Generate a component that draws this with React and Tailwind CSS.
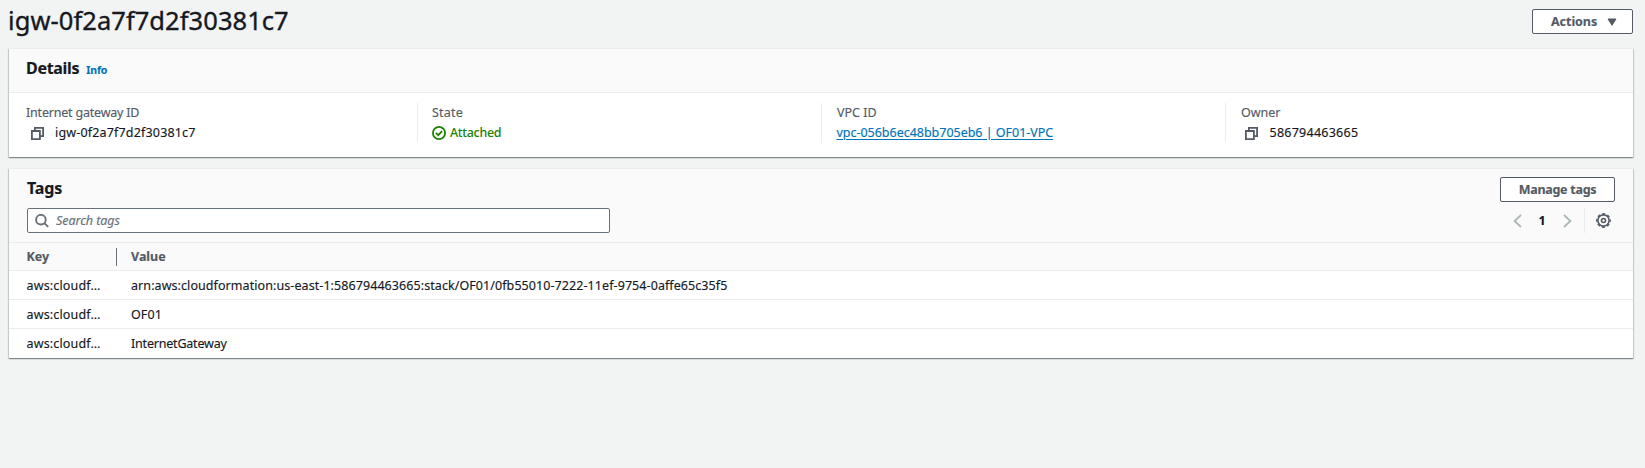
import React from "react";

const panel =
  "border-t border-[#eaeded] bg-white shadow-[0_1px_1px_0_rgba(0,28,36,0.3),1px_1px_1px_0_rgba(0,28,36,0.15),-1px_1px_1px_0_rgba(0,28,36,0.15)]";

const button =
  "flex h-[25px] items-center rounded-[2px] border border-[#545b64] bg-white text-[12.5px] leading-[23px] font-bold text-[#545b64]";

const rows = [
  {
    value:
      "arn:aws:cloudformation:us-east-1:586794463665:stack/OF01/0fb55010-7222-11ef-9754-0affe65c35f5",
    style: "tracking-[0.075px]",
    line: "pt-[2px]",
  },
  { value: "OF01", style: "tracking-[0.1px]", line: "pt-[2px]" },
  { value: "InternetGateway", style: "tracking-[-0.2px]", line: "" },
];

function CopyIcon() {
  return (
    <svg className="ml-1 size-[13px] shrink-0" viewBox="0 0 13 13" fill="none" stroke="#545b64" strokeWidth="1.8">
      <path d="M0.9 4h8v8.1h-8z" />
      <path d="M3.9 4V0.9h8.2v8.2H8.9" />
    </svg>
  );
}

function CheckIcon() {
  return (
    <svg className="size-[14px] shrink-0" viewBox="0 0 14 14" fill="none" stroke="#1d8102" strokeWidth="1.8">
      <circle cx="7" cy="7" r="6.1" />
      <path d="M3.9 6.9l2.3 2.3 3.9-4" />
    </svg>
  );
}

function SearchIcon() {
  return (
    <svg className="size-[14px] shrink-0" viewBox="0 0 14 14" fill="none" stroke="#687078" strokeWidth="1.9">
      <circle cx="5.9" cy="5.7" r="4.8" />
      <path d="M9.3 9.1l3.9 3.8" />
    </svg>
  );
}

function Chevron({ d }) {
  return (
    <svg className="h-[14px] w-[9px]" viewBox="0 0 9 14" fill="none" stroke="#aab7b8" strokeWidth="1.8">
      <path d={d} />
    </svg>
  );
}

function GearIcon() {
  return (
    <svg className="size-[15px]" viewBox="0 0 15 15" fill="none" stroke="#545b64">
      <circle cx="7.5" cy="7.5" r="5.6" strokeWidth="1.6" />
      <circle cx="7.5" cy="7.5" r="6.7" strokeWidth="1.4" strokeDasharray="2.9 2.36" strokeDashoffset="1.45" />
      <circle cx="7.5" cy="7.5" r="2" strokeWidth="1.6" />
    </svg>
  );
}

function Field({ label, first, children }) {
  return (
    <div className={first ? "h-10 pl-[17px]" : "h-10 border-l border-[#eaeded] pl-[14px]"}>
      <div className="h-5 leading-[19px] text-[#545b64]">{label}</div>
      <div className="flex h-5 items-center leading-5">{children}</div>
    </div>
  );
}

export default function App() {
  return (
    <div className="h-[468px] overflow-hidden bg-[#f2f3f3] pr-[12px] pl-[9px] font-['Noto_Sans',sans-serif] text-[12.5px] text-[#16191f] [-webkit-text-stroke:0.15px]">
      <header className="flex h-12 items-start justify-between pt-[9px]">
        <h1 className="-ml-px h-[25px] text-[25.5px] leading-[23px] tracking-[0.06px] [-webkit-text-stroke:0.35px]">
          igw-0f2a7f7d2f30381c7
        </h1>
        <button className={`${button} w-[101px] gap-[10px] pl-[18px] tracking-[-0.05px]`}>
          Actions
          <svg className="mt-px h-[8px] w-[10px]" viewBox="0 0 10 8" fill="#545b64" stroke="#545b64" strokeLinejoin="round">
            <path d="M1 1h8L5 7.3z" />
          </svg>
        </button>
      </header>

      <section className={`${panel} h-[109px]`}>
        <div className="flex h-11 items-baseline gap-[7px] border-b border-[#eaeded] bg-[#fafafa] pt-2 pl-[17px]">
          <h2 className="text-[16px] leading-[23px] font-bold tracking-[-0.3px]">Details</h2>
          <a className="text-[10.5px] font-bold tracking-[-0.15px] text-[#0073bb]">Info</a>
        </div>
        <div className="grid grid-cols-[408px_404px_404px_1fr] pt-[10px]">
          <Field label={<span className="tracking-[-0.2px]">Internet gateway ID</span>} first>
            <span className="w-px" />
            <CopyIcon />
            <span className="ml-[11px] tracking-[0.17px]">igw-0f2a7f7d2f30381c7</span>
          </Field>
          <Field label={<span className="tracking-[0.2px]">State</span>}>
            <CheckIcon />
            <span className="ml-1 font-medium tracking-[-0.33px] text-[#1d8102] [-webkit-text-stroke:0px]">Attached</span>
          </Field>
          <Field label={<span className="ml-px">VPC ID</span>}>
            <a className="ml-[0.5px] tracking-[-0.02px] text-[#0073bb] underline underline-offset-2">
              vpc-056b6ec48bb705eb6 | OF01-VPC
            </a>
          </Field>
          <Field label={<span className="ml-px">Owner</span>}>
            <span className="w-px" />
            <CopyIcon />
            <span className="ml-[11.5px] tracking-[0.25px]">586794463665</span>
          </Field>
        </div>
      </section>

      <section className={`${panel} mt-[11px] h-[190px]`}>
        <div className="h-[74px] border-b border-[#eaeded] bg-[#fafafa] pr-[18px] pl-[18px]">
          <div className="flex h-[39px] justify-between pt-2">
            <h2 className="text-[16px] leading-[23px] font-bold tracking-[-0.1px]">Tags</h2>
            <button className={`${button} w-[115px] justify-center tracking-[-0.28px]`}>Manage tags</button>
          </div>
          <div className="flex justify-between">
            <div className="flex h-[25px] w-[583px] items-center rounded-[2px] border border-[#687078] bg-white pl-[6.5px]">
              <SearchIcon />
              <span className="ml-[7.5px] pt-[2px] tracking-[-0.05px] text-[#687078] italic">Search tags</span>
            </div>
            <div className="flex h-[25px] items-center">
              <Chevron d="M8 1L1.6 7L8 13" />
              <span className="w-[41px] pr-px pt-px text-center font-bold">1</span>
              <Chevron d="M1 1L7.4 7L1 13" />
              <span className="ml-[12px] h-[25px] w-px bg-[#eaeded]" />
              <span className="mr-[4.5px] ml-[10.5px]">
                <GearIcon />
              </span>
            </div>
          </div>
        </div>
        <div className="flex h-7 items-center border-b border-[#eaeded] bg-[#fafafa] pl-[17.5px] leading-[27px] font-bold text-[#545b64]">
          <span className="w-[89.5px]">Key</span>
          <span className="h-[18px] w-px bg-[#687078]" />
          <span className="ml-[14px]">Value</span>
        </div>
        {rows.map((row) => (
          <div
            key={row.value}
            className={`flex h-[29px] items-center border-b border-[#eaeded] pl-[17.5px] leading-[26px] last:border-b-0 ${row.line}`}
          >
            <span className="w-[104.5px] tracking-[0.15px]">aws:cloudf…</span>
            <span className={row.style}>{row.value}</span>
          </div>
        ))}
      </section>
    </div>
  );
}
